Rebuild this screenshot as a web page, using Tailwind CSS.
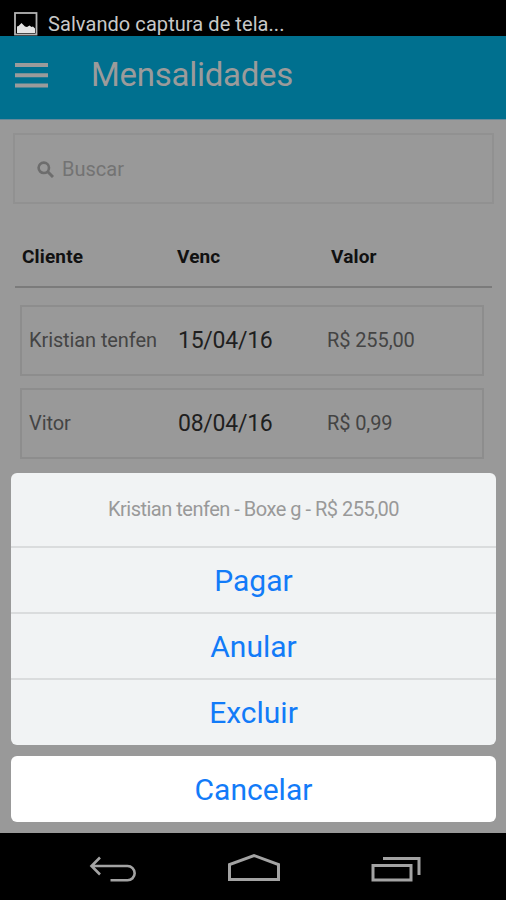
<!DOCTYPE html>
<html lang="pt-BR">
<head>
  <meta charset="UTF-8" />
  <meta name="viewport" content="width=device-width, initial-scale=1.0"/>
  <title>Mensalidades</title>
  <script src="https://cdn.jsdelivr.net/npm/@tailwindcss/browser@4"></script>
</head>
<body class="bg-black font-[Roboto,sans-serif]">
<div class="relative w-[506px] h-[900px] flex flex-col overflow-hidden whitespace-nowrap">

  <!-- Barra de status -->
  <div class="h-9 shrink-0 flex items-center pl-[14px] pt-[11px] bg-black">
    <svg class="w-6 h-6" viewBox="0 0 24 24" fill="none">
      <rect x="1" y="1" width="21.5" height="21.5" stroke="#b4b4b4" stroke-width="1.8" />
      <path d="M3 21V14.500l1.500-.5 3-3 3.500 3.500 2 .5 2.500-1.500 2 1.500 1.500-.5 2 2V21z" fill="#e4e4e4" />
    </svg>
    <span class="ml-[10px] text-[20px] leading-6 tracking-[0.07px] text-[#c8c8c8]">Salvando captura de tela...</span>
  </div>

  <!-- Cabeçalho -->
  <header class="h-[84px] shrink-0 flex items-center pl-[15px] pb-[5px] bg-[#00708f] border-b border-[#66899a]">
    <svg class="w-[33px] h-[25px]" viewBox="0 0 33 25" fill="#9b9b9b">
      <path d="M0 0h33v4H0zM0 10.300h33v4H0zM0 20.500h33v4H0z" />
    </svg>
    <h1 class="ml-[43px] text-[33px] leading-10 tracking-[-0.27px] text-[#9b9b9b]">Mensalidades</h1>
  </header>

  <main class="grow flex flex-col bg-[#999]">
    <!-- Busca -->
    <div class="mt-[13px] ml-[13px] w-[481px] h-[71px] shrink-0 flex items-center pl-[22px] border-2 border-[#919191]">
      <svg class="w-[17px] h-[17px] mt-px" viewBox="0 0 17 17" fill="none" stroke="#6d6d6d">
        <circle cx="6.8" cy="6.8" r="5.2" stroke-width="2.6" />
        <path d="M10.800 10.800l5.200 5.200" stroke-width="3" />
      </svg>
      <span class="ml-[8px] text-[20px] leading-6 text-[#737373]">Buscar</span>
    </div>

    <!-- Títulos das colunas -->
    <div class="mt-[41px] ml-[15px] w-[477px] h-[43px] shrink-0 grid grid-cols-[155px_154px_1fr] pl-[7px] border-b-2 border-[#7b7b7b] text-[19px] leading-6 tracking-[0.15px] font-bold text-[#111]">
      <span>Cliente</span>
      <span>Venc</span>
      <span>Valor</span>
    </div>

    <!-- Mensalidades -->
    <div class="mt-[17px] ml-[20px] w-[464px] flex flex-col gap-3">
      <div class="h-[71px] grid grid-cols-[149px_149px_1fr] items-center pl-[7px] pb-px border-2 border-[#8d8d8d] text-[20px] tracking-[-0.1px] text-[#444]">
        <span>Kristian tenfen</span>
        <span class="pt-[3px] text-[23px] tracking-[-0.25px] text-[#1f1f1f]">15/04/16</span>
        <span>R$ 255,00</span>
      </div>
      <div class="h-[71px] grid grid-cols-[149px_149px_1fr] items-center pl-[7px] pb-px border-2 border-[#8d8d8d] text-[20px] tracking-[-0.1px] text-[#444]">
        <span>Vitor</span>
        <span class="pt-[3px] text-[23px] tracking-[-0.25px] text-[#1f1f1f]">08/04/16</span>
        <span>R$ 0,99</span>
      </div>
    </div>
  </main>

  <!-- Menu de ações -->
  <div class="absolute left-[11px] top-[473px] w-[485px] flex flex-col gap-[11px] text-[30px] text-[#127bf8]">
    <div class="h-[272px] rounded-[6px] bg-[#f1f3f4] flex flex-col overflow-hidden">
      <div class="h-[73px] flex items-center justify-center pb-px text-[20px] tracking-[-0.5px] text-[#999]">
        <span>Kristian tenfen - Boxe g - R$ 255,00</span>
      </div>
      <button class="h-[66px] border-t-2 border-[#dadcdd]">Pagar</button>
      <button class="h-[66px] border-t-2 border-[#dadcdd]">Anular</button>
      <button class="h-[66px] border-t-2 border-[#dadcdd]">Excluir</button>
    </div>
    <button class="h-[66px] rounded-[6px] bg-white">Cancelar</button>
  </div>

  <!-- Barra de navegação -->
  <nav class="h-[67px] shrink-0 bg-black flex items-start pt-[20px] pl-[89px]">
    <svg class="w-[48px] h-[28px] mt-px" viewBox="0 0 48 28" fill="none" stroke="#a3a3a3" stroke-width="2.6">
      <path d="M11 3.500L2.500 12l8.500 8.500M2.500 12H38.500a7 7 0 0 1 0 14.300H21.500" />
    </svg>
    <svg class="w-[54px] h-[28px] ml-[90px]" viewBox="0 0 54 28" fill="none" stroke="#a3a3a3" stroke-width="3">
      <path d="M2.500 26.500V11.500L27 2.500l24.500 9v15z" />
    </svg>
    <svg class="w-[50px] h-[28px] ml-[90px] mt-px" viewBox="0 0 50 28" fill="none" stroke="#a3a3a3" stroke-width="3">
      <path d="M2 11.500h38v14.500H2zM12 4.500h36v16.500" />
    </svg>
  </nav>
</div>
</body>
</html>
